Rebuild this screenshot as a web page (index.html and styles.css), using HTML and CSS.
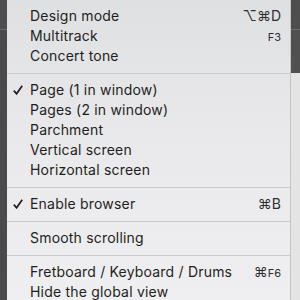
FILE: index.html
```html
<!DOCTYPE html>
<html lang="en">
<head>
    <meta charset="UTF-8">
    <meta name="viewport" content="width=device-width, initial-scale=1.0">
    <title>View menu</title>
    <link rel="stylesheet" href="styles.css">
</head>
<body>
    <div class="screen">
        <div class="backdrop-left"></div>

        <div class="menu">
            <div class="item"><span class="check"></span><span class="label">Design mode</span><span class="key">⌥⌘D</span></div>
            <div class="item"><span class="check"></span><span class="label">Multitrack</span><span class="key"><small>F3</small></span></div>
            <div class="item"><span class="check"></span><span class="label">Concert tone</span></div>

            <div class="separator"></div>

            <div class="item"><span class="check"><svg viewBox="0 0 10 10"><path d="M0.8 5.6 L3.6 8.8 L9.2 0.8"/></svg></span><span class="label">Page (1 in window)</span></div>
            <div class="item"><span class="check"></span><span class="label">Pages (2 in window)</span></div>
            <div class="item"><span class="check"></span><span class="label">Parchment</span></div>
            <div class="item"><span class="check"></span><span class="label">Vertical screen</span></div>
            <div class="item"><span class="check"></span><span class="label">Horizontal screen</span></div>

            <div class="separator"></div>

            <div class="item"><span class="check"><svg viewBox="0 0 10 10"><path d="M0.8 5.6 L3.6 8.8 L9.2 0.8"/></svg></span><span class="label">Enable browser</span><span class="key">⌘B</span></div>

            <div class="separator"></div>

            <div class="item"><span class="check"></span><span class="label">Smooth scrolling</span></div>

            <div class="separator"></div>

            <div class="item"><span class="check"></span><span class="label">Fretboard / Keyboard / Drums</span><span class="key">⌘<small>F6</small></span></div>
            <div class="item"><span class="check"></span><span class="label">Hide the global view</span></div>
        </div>

        <div class="backdrop-right">
            <div class="backdrop-dark"></div>
            <div class="backdrop-light"></div>
        </div>
    </div>
</body>
</html>
```

FILE: styles.css
```css
* {
    margin: 0;
    padding: 0;
    box-sizing: border-box;
}

body {
    width: 300px;
    height: 300px;
    overflow: hidden;
    font-family: 'Inter', 'DejaVu Sans', sans-serif;
    background: #4c4c4c;
}

.screen {
    display: flex;
    height: 300px;
}

/* Fondo detrás del menú */
.backdrop-left {
    width: 7px;
    background: linear-gradient(to bottom, #4e4e4e 0, #4e4e4e 29px, #6c6c6c 29px, #6c6c6c 30px, #4a4a4a 30px);
}

.backdrop-right {
    width: 10px;
    display: flex;
    flex-direction: column;
    border-left: 1px solid #c4c4c6;
}

.backdrop-dark {
    height: 73px;
    background: linear-gradient(to bottom, #4e4e4e 0, #4e4e4e 29px, #6c6c6c 29px, #6c6c6c 30px, #505050 30px);
}

.backdrop-light {
    flex: 1;
    background: #e4e4e4;
}

/* Menú */
.menu {
    width: 283px;
    height: 300px;
    overflow: hidden;
    padding-top: 6px;
    background: linear-gradient(to bottom, #dfe0e2 0%, #e9e9ec 45%, #efeff1 100%);
    color: #1e1e20;
}

.item {
    display: flex;
    align-items: center;
    height: 20px;
    line-height: 20px;
    padding-right: 9px;
    font-size: 14px;
    letter-spacing: 0.2px;
    white-space: nowrap;
}

.check {
    width: 23px;
    height: 20px;
    display: flex;
    align-items: center;
    padding-left: 6px;
}

.check svg {
    width: 10px;
    height: 10px;
    fill: none;
    stroke: #1e1e20;
    stroke-width: 1.7;
}

.label {
    flex: 1;
}

.key {
    font-size: 14px;
    letter-spacing: 0;
    color: #2e2e30;
}

.key small {
    font-size: 11px;
}

.separator {
    height: 14px;
    padding-top: 7px;
}

.separator::before {
    content: '';
    display: block;
    height: 1px;
    background: #cbcbce;
}
```
